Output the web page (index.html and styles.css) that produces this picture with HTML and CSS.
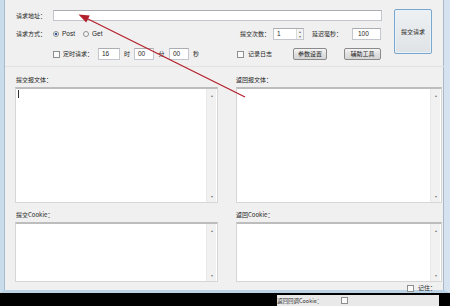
FILE: index.html
```html
<!DOCTYPE html>
<html>
<head>
<meta charset="utf-8">
<link rel="stylesheet" href="styles.css">
</head>
<body>
<div class="screen">
  <div class="window">
    <div class="top">
      <div class="top-left">
        <div class="row row1">
          <span class="lbl w37">请求地址：</span>
          <span class="input url"></span>
        </div>
        <div class="row row2">
          <div class="group g2">
            <span class="lbl w37">请求方式：</span>
            <span class="opt"><span class="radio checked"></span><span class="latin">Post</span></span>
            <span class="opt"><span class="radio"></span><span class="latin">Get</span></span>
          </div>
          <span class="lbl w33">提交次数：</span>
          <span class="input spin"><span class="latin">1</span><span class="spinbtns"><span>▴</span><span>▾</span></span></span>
          <span class="lbl w40 ml8">延迟毫秒：</span>
          <span class="input delay"><span class="latin">100</span></span>
        </div>
        <div class="row row3">
          <div class="group g3">
            <span class="w37"></span>
            <span class="check"></span>
            <span class="lbl w35 ml3">定时请求：</span>
            <span class="input num w22"><span class="latin">16</span></span>
            <span class="unit w14">时</span>
            <span class="input num w20"><span class="latin">00</span></span>
            <span class="unit w15">分</span>
            <span class="input num w20"><span class="latin">00</span></span>
            <span class="unit ml4">秒</span>
          </div>
          <span class="check"></span>
          <span class="lbl w45 ml4">记录日志</span>
          <span class="btn w34">参数设置</span>
          <span class="btn w37 ml17">辅助工具</span>
        </div>
      </div>
      <div class="submit">提交请求</div>
    </div>
    <div class="lower">
      <div class="col">
        <div class="cap">提交报文体：</div>
        <div class="textbox big"><div class="content"><span class="caret"></span></div><div class="scroll"><span>▴</span><span>▾</span></div></div>
        <div class="cap cap2">提交Cookie：</div>
        <div class="textbox small"><div class="content"></div><div class="scroll"><span>▴</span><span>▾</span></div></div>
      </div>
      <div class="col right">
        <div class="cap">返回报文体：</div>
        <div class="textbox big"><div class="content"></div><div class="scroll"><span>▴</span><span>▾</span></div></div>
        <div class="cap cap2">返回Cookie：</div>
        <div class="textbox small"><div class="content"></div><div class="scroll"><span>▴</span><span>▾</span></div></div>
      </div>
    </div>
    <div class="remember"><span class="check"></span><span class="lbl ml4">记住：</span></div>
  </div>
  <div class="taskbar">
    <div class="strip"><span class="lbl small-text">返回回调Cookie：</span><span class="check ml19"></span></div>
  </div>
  <svg class="arrow" width="450" height="306" viewBox="0 0 450 306">
    <line x1="245" y1="97" x2="87" y2="18.5" stroke="#b3202c" stroke-width="1.3"/>
    <polygon points="78.5,14.5 89.8,15.6 86.2,22.4" fill="#b3202c"/>
  </svg>
</div>
</body>
</html>
```
FILE: styles.css
```css
* { box-sizing: border-box; }
html, body { margin: 0; padding: 0; }
body {
  width: 450px;
  height: 306px;
  overflow: hidden;
  background: #000;
  font-family: "Noto Sans CJK SC", "Liberation Sans", sans-serif;
  font-size: 6px;
  color: #1e1e1e;
}
.screen {
  position: relative;
  width: 450px;
  height: 306px;
  display: flex;
  flex-direction: column;
}
.window {
  height: 293px;
  background: #f0f0f0;
  border-left: 4px solid #c9dceb;
  border-right: 6px solid #d4e3ef;
  border-bottom: 3px solid #bcd3e6;
  padding: 9px 0 0 12px;
  display: flex;
  flex-direction: column;
  box-shadow: inset 1px 0 0 #a9bccd, inset -1px 0 0 #a9b9c8;
}
.top {
  display: flex;
  height: 58px;
  flex: none;
  margin-left: -11px;
  padding-left: 11px;
  border-bottom: 1px solid #e2e2e2;
}
.top-left {
  width: 366px;
  display: flex;
  flex-direction: column;
}
.row {
  display: flex;
  align-items: center;
  height: 12px;
}
.row1 { height: 11px; margin-top: 1px; }
.row2 { margin-top: 7px; }
.row3 { margin-top: 8px; }
.group { display: flex; align-items: center; height: 12px; }
.g2 { width: 224px; }
.g3 { width: 221px; }
.lbl { white-space: nowrap; line-height: 8px; }
.latin { font-family: "Liberation Sans", sans-serif; font-size: 6.5px; line-height: 8px; }
.w37 { width: 37px; flex: none; }
.w33 { width: 33px; flex: none; }
.w40 { width: 40px; flex: none; }
.w35 { width: 35px; flex: none; }
.w45 { width: 45px; flex: none; }
.w34 { width: 34px; flex: none; }
.w22 { width: 22px; flex: none; }
.w20 { width: 20px; flex: none; }
.w14 { width: 14px; flex: none; }
.w15 { width: 15px; flex: none; }
.ml3 { margin-left: 3px; }
.ml4 { margin-left: 4px; }
.ml8 { margin-left: 8px; }
.ml17 { margin-left: 17px; }
.ml19 { margin-left: 19px; }
.input {
  background: #fff;
  border: 1px solid #c3c6cc;
  border-top-color: #abadb3;
  height: 12px;
  display: flex;
  align-items: center;
  padding-left: 3px;
}
.url { width: 330px; height: 11px; }
.spin { width: 31px; justify-content: space-between; padding-right: 0; }
.spinbtns {
  width: 7px;
  height: 10px;
  display: flex;
  flex-direction: column;
  border-left: 1px solid #dadada;
  background: #f4f4f4;
  font-size: 4px;
  line-height: 5px;
  color: #777;
  text-align: center;
}
.delay { width: 29px; padding-left: 5px; }
.num { padding-left: 3px; }
.unit { text-align: center; line-height: 8px; }
.opt { display: flex; align-items: center; width: 30px; gap: 3px; }
.radio {
  width: 6px;
  height: 6px;
  border-radius: 50%;
  border: 1px solid #8e8f8f;
  background: #f6f6f6;
  flex: none;
}
.radio.checked {
  background: radial-gradient(circle, #2a5b9c 0, #2a5b9c 1.4px, #f6f6f6 1.6px);
}
.check {
  width: 7px;
  height: 7px;
  border: 1px solid #8e8f8f;
  background: #fbfbfb;
  flex: none;
}
.btn {
  height: 12px;
  border: 1px solid #8a8a8a;
  border-radius: 2px;
  background: linear-gradient(#f4f4f4, #e0e0e0 50%, #d6d6d6);
  display: flex;
  align-items: center;
  justify-content: center;
  line-height: 8px;
}
.w37.btn { width: 37px; }
.submit {
  width: 38px;
  height: 45px;
  margin-left: 12px;
  border: 1px solid #7ba7cd;
  border-radius: 2px;
  background: linear-gradient(#eef1f3, #dfe3e6);
  box-shadow: inset 0 0 0 1px #e8f2fa;
  display: flex;
  align-items: center;
  justify-content: center;
  line-height: 8px;
}
.lower {
  display: flex;
  padding-top: 9px;
  margin-left: -1px;
}
.col { width: 203px; display: flex; flex-direction: column; }
.col.right { width: 206px; margin-left: 18px; }
.cap { height: 8px; line-height: 8px; padding-left: 1px; margin-bottom: 3px; }
.cap2 { margin-top: 8px; }
.right .cap { padding-left: 0; }
.textbox {
  display: flex;
  background: #fff;
  border: 1px solid #d6d6d6;
  border-top: 2px solid #bdbdbd;
}
.big { height: 116px; }
.small { height: 60px; }
.content { flex: 1; position: relative; }
.caret {
  position: absolute;
  left: 2px;
  top: 1px;
  width: 1px;
  height: 8px;
  background: #333;
}
.scroll {
  width: 10px;
  background: #f1f1f1;
  border-left: 1px solid #e8e8e8;
  margin-right: 1px;
  display: flex;
  flex-direction: column;
  justify-content: space-between;
  align-items: center;
  font-size: 4px;
  line-height: 8px;
  color: #7a7a7a;
  padding: 2px 0;
}
.remember {
  display: flex;
  align-items: center;
  align-self: flex-end;
  margin-right: 8px;
  margin-top: 2px;
  height: 8px;
}
.taskbar {
  height: 13px;
  background: #000;
  display: flex;
  padding-left: 277px;
  padding-top: 2px;
}
.strip {
  width: 162px;
  height: 11px;
  background: #e9e9e9;
  display: flex;
  align-items: center;
}
.small-text { font-size: 5.5px; color: #333; }
.arrow {
  position: absolute;
  left: 0;
  top: 0;
  pointer-events: none;
}
```
